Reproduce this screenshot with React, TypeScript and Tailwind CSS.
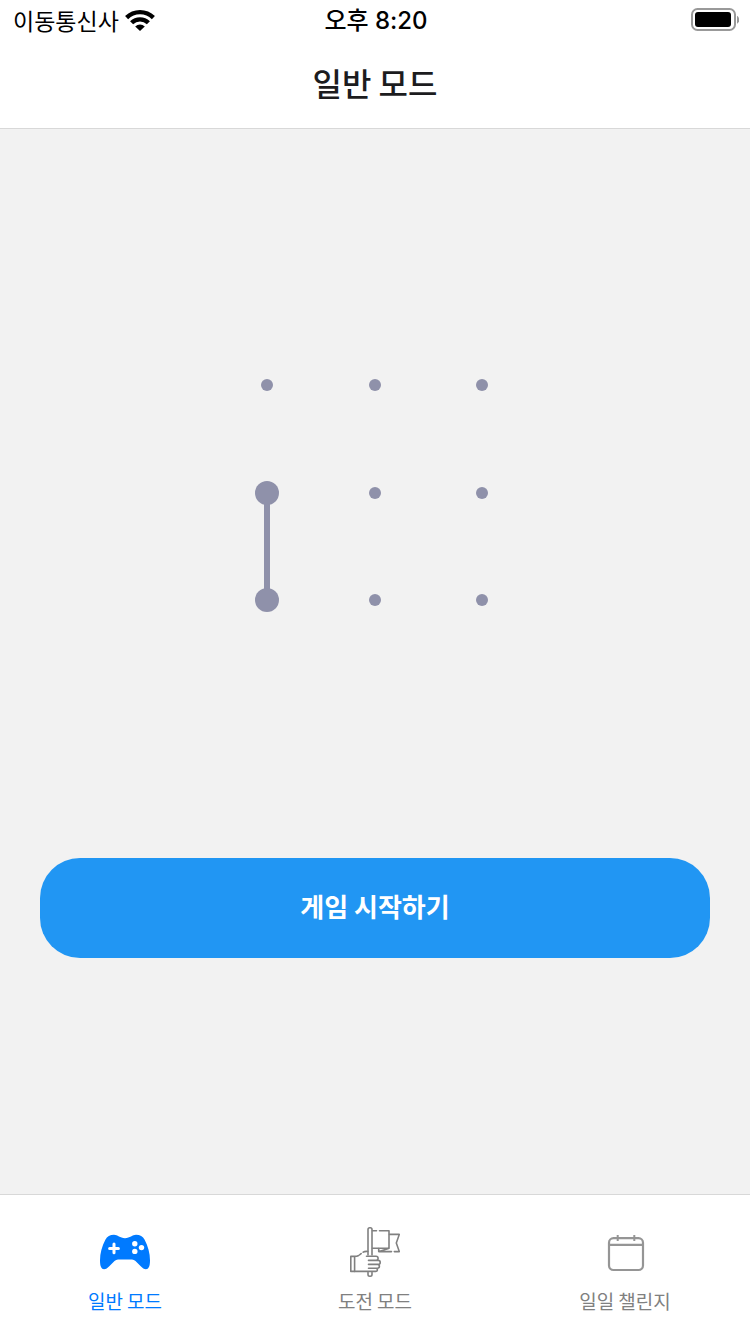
import React, { useState } from "react";

function WifiIcon() {
  return (
    <svg viewBox="0 0 30 22" className="h-[22px] w-[30px]" aria-hidden="true">
      <g fill="none" stroke="#000" strokeWidth="4.4">
        <path d="M1.6 8.6a19.2 19.2 0 0 1 26.8 0" />
        <path d="M6.6 13.8a12 12 0 0 1 16.8 0" />
      </g>
      <path d="M10.2 17.4a7 7 0 0 1 9.6 0L15 22z" fill="#000" />
    </svg>
  );
}

function BatteryIcon() {
  return (
    <svg viewBox="0 0 48 24" className="h-6 w-12" role="img" aria-label="배터리">
      <rect x="1" y="1" width="43" height="21" rx="5.5" fill="none" stroke="#999" strokeWidth="2" />
      <rect x="4" y="4" width="36" height="15" rx="3" fill="#000" />
      <path d="M46 7.7q2.2 1.2 2.2 4T46 15.7z" fill="#999" />
    </svg>
  );
}

function GamepadIcon() {
  return (
    <svg viewBox="0 0 50 50" className="size-[50px]" aria-hidden="true">
      <path
        d="M14 7.8C17.5 7.8 20 11.2 25 11.2S32.5 7.8 36 7.8C40 7.8 43 9.5 44.5 12.5C48 19 50 26 50 33.5C50 39.5 48.5 42.2 46 42.2C44 42.2 42.5 41 41 39.5L35.5 34Q34 32.5 32 32.5H18Q16 32.5 14.5 34L9 39.5C7.5 41 6 42.2 4 42.2C1.5 42.2 0 39.5 0 33.5C0 26 2 19 5.5 12.5C7 9.5 10 7.8 14 7.8Z"
        fill="#007aff"
      />
      <path d="M14 17v8.8M9.6 21.4h8.8" stroke="#fff" strokeWidth="3" strokeLinecap="round" />
      <g fill="#fff">
        <circle cx="34.8" cy="16.8" r="2.7" />
        <circle cx="34.8" cy="24.4" r="2.7" />
        <circle cx="41.5" cy="20.6" r="2.7" />
      </g>
    </svg>
  );
}

function FlagIcon() {
  return (
    <svg
      viewBox="0 0 50 50"
      className="size-[50px]"
      fill="none"
      stroke="#808080"
      strokeWidth="1.6"
      strokeLinecap="round"
      strokeLinejoin="round"
      aria-hidden="true"
    >
      <path d="M18 28V2.5A1.7 1.7 0 0 1 19.7.8h.6A1.7 1.7 0 0 1 22 2.5V28" />
      <path d="M18 45.500v2a1.700 1.700 0 0 0 1.700 1.700h.6a1.700 1.700 0 0 0 1.700-1.700v-2" />
      <path d="M22.500 3.700h4M29.500 3.700H39v17.600H22.500" />
      <path d="M39.500 7.400h9.800L46.300 16l3 8.600h-5M41.500 24.600H28.700v-3M29 24.400l9.500-3" />
      <path d="M.8 29.400h3.800v15H.8zM4.600 29.400c1.400 0 2.600-.1 3.600-.7M9.400 28l1.700-1.400M13.200 25.200c1.200-.8 2.800-.9 4.600-.7" />
      <path d="M16.500 29.200H26a2.100 2.100 0 0 1 0 4.200h-7.500M26.500 33.400h1.700a2 2 0 0 1 0 4h-9.700M27.500 37.400a1.900 1.900 0 0 1 0 3.800h-9M26 41.200a1.600 1.600 0 0 1-.5 3.200H4.600" />
    </svg>
  );
}

function CalendarIcon() {
  return (
    <svg viewBox="0 0 50 50" className="size-[50px]" fill="none" stroke="#959595" strokeWidth="2.2" aria-hidden="true">
      <rect x="9" y="11.2" width="34" height="31.8" rx="4.5" />
      <path d="M9 17.8h34" />
      <path d="M17.7 8v6M34.3 8v6" strokeWidth="2" />
    </svg>
  );
}

const columns = [54, 162, 269];
const rows = [54, 162, 269];
const selected = [3, 6];

function PatternLock() {
  return (
    <svg viewBox="0 0 324 324" className="size-[324px]" fill="#8f91aa" role="img" aria-label="패턴">
      <path d="M54 162v107" stroke="#8f91aa" strokeWidth="6" />
      {rows.map((y, r) =>
        columns.map((x, c) => {
          const index = r * 3 + c;
          return <circle key={index} cx={x} cy={y} r={selected.includes(index) ? 12 : 6} />;
        })
      )}
    </svg>
  );
}

const tabs = [
  { label: "일반 모드", Icon: GamepadIcon },
  { label: "도전 모드", Icon: FlagIcon },
  { label: "일일 챌린지", Icon: CalendarIcon },
];

export default function App() {
  const [active, setActive] = useState(0);

  return (
    <div className="flex min-h-screen flex-col bg-[#f2f2f2] font-['Inter','Noto_Sans_CJK_KR',sans-serif]">
      <header className="border-b border-[#d8d8d8] bg-white">
        <div className="grid h-10 grid-cols-3 items-center pr-[11px] pl-[13px] text-black">
          <div className="flex items-center gap-[6px] text-[23px] leading-[38px]">
            <span className="font-['Noto_Sans_CJK_KR',sans-serif]">이동통신사</span>
            <WifiIcon />
          </div>
          <time className="pt-[2px] text-center text-2xl leading-[38px] font-medium">오후 8:20</time>
          <div className="flex justify-end">
            <BatteryIcon />
          </div>
        </div>
        <h1 className="pb-1 text-center font-['Noto_Sans_CJK_KR',sans-serif] text-[32px] leading-[84px] font-medium text-[#1c1c1e]">
          일반 모드
        </h1>
      </header>

      <main className="flex flex-1 flex-col items-center px-10 pt-[202px] pb-10 font-['Noto_Sans_CJK_KR',sans-serif]">
        <PatternLock />
        <button
          type="button"
          className="mt-[203px] h-[100px] w-full rounded-[40px] bg-[#2196f3] pb-[6px] text-[26px] font-bold text-white"
        >
          게임 시작하기
        </button>
      </main>

      <nav className="grid grid-cols-3 border-t border-[#d8d8d8] bg-white font-['Noto_Sans_CJK_KR',sans-serif]">
        {tabs.map(({ label, Icon }, i) => (
          <button
            key={label}
            type="button"
            onClick={() => setActive(i)}
            aria-current={active === i ? "page" : undefined}
            className={`flex flex-col items-center gap-3 pt-8 pb-[21px] text-[19px] leading-6 ${
              active === i ? "text-[#007aff]" : "text-[#808080]"
            }`}
          >
            <Icon />
            <span>{label}</span>
          </button>
        ))}
      </nav>
    </div>
  );
}
